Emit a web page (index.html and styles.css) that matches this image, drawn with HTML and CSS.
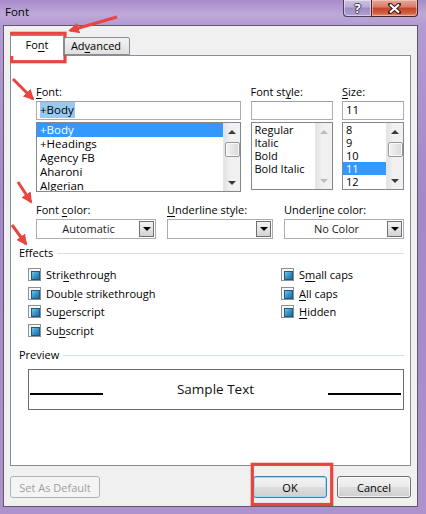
FILE: index.html
```html
<!DOCTYPE html>
<html lang="en">
<head>
    <meta charset="UTF-8">
    <title>Font</title>
    <link rel="stylesheet" href="styles.css">
</head>
<body>
    <div class="window">
        <div class="titlebar">
            <span class="title">Font</span>
            <div class="caption">
                <span class="cap-help">?</span>
                <span class="cap-close">
                    <svg width="13" height="11" viewBox="0 0 13 11">
                        <path d="M2 1.5 L11 9.5 M11 1.5 L2 9.5" stroke="#3b2226" stroke-width="4" stroke-linecap="square"/>
                        <path d="M2 1.5 L11 9.5 M11 1.5 L2 9.5" stroke="#fff" stroke-width="2"/>
                    </svg>
                </span>
            </div>
        </div>

        <div class="client">
            <div class="tabs">
                <div class="tab active">Fo<u>n</u>t</div>
                <div class="tab">Ad<u>v</u>anced</div>
            </div>

            <div class="panel">
                <div class="font-sec">
                    <div class="fcol">
                        <label><u>F</u>ont:</label>
                        <div class="input"><span class="sel-text">+Body</span></div>
                        <div class="list tall">
                            <div class="items big">
                                <div class="item selected">+Body</div>
                                <div class="item">+Headings</div>
                                <div class="item">Agency FB</div>
                                <div class="item">Aharoni</div>
                                <div class="item">Algerian</div>
                            </div>
                            <div class="scroll">
                                <span class="arr up"></span>
                                <span class="thumb"></span>
                                <span class="arr down"></span>
                            </div>
                        </div>
                    </div>
                    <div class="fcol">
                        <label>Font st<u>y</u>le:</label>
                        <div class="input"></div>
                        <div class="list">
                            <div class="items">
                                <div class="item">Regular</div>
                                <div class="item">Italic</div>
                                <div class="item">Bold</div>
                                <div class="item">Bold Italic</div>
                            </div>
                            <div class="scroll disabled">
                                <span class="arr up"></span>
                                <span class="arr down"></span>
                            </div>
                        </div>
                    </div>
                    <div class="fcol">
                        <label><u>S</u>ize:</label>
                        <div class="input">11</div>
                        <div class="list">
                            <div class="items">
                                <div class="item">8</div>
                                <div class="item">9</div>
                                <div class="item">10</div>
                                <div class="item selected">11</div>
                                <div class="item">12</div>
                            </div>
                            <div class="scroll">
                                <span class="arr up"></span>
                                <span class="thumb"></span>
                                <span class="arr down"></span>
                            </div>
                        </div>
                    </div>
                </div>

                <div class="color-row">
                    <div class="ccol w120">
                        <label>Font <u>c</u>olor:</label>
                        <div class="combo"><span class="combo-text">Automatic</span><span class="combo-btn"></span></div>
                    </div>
                    <div class="ccol w106">
                        <label><u>U</u>nderline style:</label>
                        <div class="combo"><span class="combo-text"></span><span class="combo-btn"></span></div>
                    </div>
                    <div class="ccol w120">
                        <label>Underl<u>i</u>ne color:</label>
                        <div class="combo"><span class="combo-text">No Color</span><span class="combo-btn"></span></div>
                    </div>
                </div>

                <div class="group-head effects-head">Effects</div>
                <div class="effects">
                    <div class="ecol">
                        <div class="check"><span class="cb"></span><span>Stri<u>k</u>ethrough</span></div>
                        <div class="check"><span class="cb"></span><span>Doub<u>l</u>e strikethrough</span></div>
                        <div class="check"><span class="cb"></span><span>Su<u>p</u>erscript</span></div>
                        <div class="check"><span class="cb"></span><span>Su<u>b</u>script</span></div>
                    </div>
                    <div class="ecol">
                        <div class="check"><span class="cb"></span><span>S<u>m</u>all caps</span></div>
                        <div class="check"><span class="cb"></span><span><u>A</u>ll caps</span></div>
                        <div class="check"><span class="cb"></span><span><u>H</u>idden</span></div>
                    </div>
                </div>

                <div class="group-head preview-head">Preview</div>
                <div class="preview">
                    <span class="pv-line"></span>
                    <span class="pv-text">Sample Text</span>
                    <span class="pv-line"></span>
                </div>
            </div>

            <div class="buttons">
                <button class="btn wide" disabled>Set As Default</button>
                <span class="spacer"></span>
                <button class="btn default">OK</button>
                <button class="btn">Cancel</button>
            </div>
        </div>

        <!-- red annotation marks drawn over the dialog -->
        <svg class="marks" width="426" height="514" viewBox="0 0 426 514">
            <defs>
                <marker id="head" markerWidth="3.6" markerHeight="3.6" refX="3" refY="1.8" orient="auto">
                    <path d="M0,0 L3.6,1.8 L0,3.6 z" fill="#e8453f"/>
                </marker>
            </defs>
            <rect x="11.7" y="33.3" width="53.3" height="28.4" fill="none" stroke="#e8453f" stroke-width="3.2"/>
            <rect x="252.3" y="464.3" width="79.4" height="40.2" fill="none" stroke="#e8453f" stroke-width="3.2"/>
            <g stroke="#e8453f" stroke-width="3" marker-end="url(#head)">
                <line x1="117" y1="17" x2="70" y2="30.5"/>
                <line x1="13" y1="79" x2="33" y2="99"/>
                <line x1="18" y1="182" x2="31" y2="202"/>
                <line x1="12" y1="225" x2="26" y2="244"/>
            </g>
        </svg>
    </div>
</body>
</html>
```

FILE: styles.css
```css
* {
    box-sizing: border-box;
    margin: 0;
    padding: 0;
}

body {
    width: 426px;
    height: 514px;
    overflow: hidden;
    font-family: 'Open Sans', 'Noto Sans', sans-serif;
    font-size: 11px;
    color: #000;
}

u {
    text-decoration-thickness: 1px;
    text-underline-offset: 2px;
}

.window {
    position: relative;
    width: 426px;
    height: 514px;
    padding: 0 8px 7px 3px;
    display: flex;
    flex-direction: column;
    background: linear-gradient(180deg, #a88bc9 0, #bda9d8 14px, #b39bd2 25px, #a487c7 200px, #ad92cd 514px);
}

.titlebar {
    height: 25px;
    display: flex;
    justify-content: space-between;
}

.title {
    padding: 4px 0 0 2px;
    font-size: 11.5px;
    line-height: 16px;
}

.caption {
    display: flex;
    height: 17px;
}

.cap-help, .cap-close {
    display: flex;
    align-items: center;
    justify-content: center;
    border: 1px solid #4a3f5e;
    border-top: none;
}

.cap-help {
    width: 28px;
    border-radius: 0 0 0 4px;
    border-right: none;
    background: linear-gradient(180deg, #cfc3e2 0, #b8a8d4 45%, #9f8cc1 50%, #b2a2d0 100%);
    box-shadow: inset 0 0 0 1px rgba(255, 255, 255, 0.45);
    color: #fff;
    font-weight: bold;
    font-size: 13px;
    line-height: 13px;
    text-shadow: 1px 0 0 #403850, -1px 0 0 #403850, 0 1px 0 #403850, 0 -1px 0 #403850;
}

.cap-close {
    width: 47px;
    border-radius: 0 0 4px 0;
    border-color: #4b2628;
    background: linear-gradient(180deg, #e7a89b 0, #d77a66 45%, #c2432c 50%, #cf5c3e 80%, #e39069 100%);
    box-shadow: inset 0 0 0 1px rgba(255, 220, 210, 0.5);
}

.client {
    flex: 1;
    border: 1px solid #5e586c;
    background: #f0f0f0;
    padding: 9px 6px 0 6px;
}

/* tabs */
.tabs {
    display: flex;
    align-items: flex-end;
    height: 20px;
    position: relative;
    z-index: 1;
}

.tab {
    height: 18px;
    width: 66px;
    border: 1px solid #898c95;
    border-radius: 2px 2px 0 0;
    background: linear-gradient(180deg, #f2f2f2, #e0e0e0);
    text-align: center;
    line-height: 16px;
    padding-right: 2px;
}

.tab.active {
    width: 54px;
    height: 21px;
    margin-bottom: -1px;
    border-bottom: none;
    background: #fff;
    line-height: 17px;
    padding-right: 0;
}

.panel {
    height: 411px;
    border: 1px solid #898c95;
    background: #fff;
    padding: 29px 6px 0 8px;
}

label {
    display: block;
    height: 14px;
    line-height: 14px;
}

/* font / style / size */
.font-sec {
    margin-left: 17px;
    display: grid;
    grid-template-columns: 205px 82px 62px;
    justify-content: space-between;
}

.input {
    margin-top: 2px;
    height: 19px;
    border: 1px solid #abadb3;
    border-top-color: #9ea1a8;
    padding-left: 3px;
    line-height: 16px;
    font-size: 11.5px;
}

.sel-text {
    background: #99c9ef;
    padding: 0 1px 1px 0;
}

.list {
    margin-top: 2px;
    height: 68px;
    border: 1px solid #828790;
    display: flex;
    overflow: hidden;
}

.list.tall {
    height: 70px;
}

.items {
    flex: 1;
    line-height: 13px;
}

.items.big {
    line-height: 14px;
    font-size: 11.5px;
}

.item {
    padding-left: 3px;
    white-space: nowrap;
}

.item.selected {
    background: #3399ff;
    color: #fff;
}

.scroll {
    width: 17px;
    display: flex;
    flex-direction: column;
    align-items: center;
    background: linear-gradient(90deg, #e3e3e3, #f1f1f1 40%, #f1f1f1);
    border-left: 1px solid #e6e6e6;
}

.arr {
    width: 0;
    height: 0;
    border-left: 4px solid transparent;
    border-right: 4px solid transparent;
}

.arr.up {
    margin-top: 7px;
    border-bottom: 4px solid #3a3a3a;
}

.arr.down {
    margin-top: auto;
    margin-bottom: 6px;
    border-top: 4px solid #3a3a3a;
}

.scroll.disabled .arr.up {
    border-bottom-color: #bdbdbd;
}

.scroll.disabled .arr.down {
    border-top-color: #bdbdbd;
}

.thumb {
    margin-top: 8px;
    width: 15px;
    height: 15px;
    border: 1px solid #979797;
    border-radius: 2px;
    background: linear-gradient(90deg, #f3f3f3, #e6e6e6 50%, #d8d8d8);
    box-shadow: inset 0 0 0 1px rgba(255, 255, 255, 0.8);
}

/* colour / underline combos */
.color-row {
    margin-top: 11px;
    margin-left: 17px;
    display: flex;
    justify-content: space-between;
}

.w120 {
    width: 120px;
}

.w106 {
    width: 106px;
}

.combo {
    margin-top: 2px;
    height: 20px;
    border: 1px solid #abadb3;
    background: #fff;
    display: flex;
    padding: 1px;
}

.combo-text {
    flex: 1;
    text-align: center;
    line-height: 16px;
    color: #1a1a1a;
}

.combo-btn {
    width: 15px;
    border: 1px solid #707070;
    background: linear-gradient(180deg, #f4f4f4, #e4e4e4 50%, #d3d3d3);
    display: flex;
    align-items: center;
    justify-content: center;
}

.combo-btn::after {
    content: "";
    border-left: 4px solid transparent;
    border-right: 4px solid transparent;
    border-top: 4px solid #000;
}

/* group headers */
.group-head {
    display: flex;
    align-items: center;
    height: 14px;
    line-height: 14px;
    gap: 4px;
}

.group-head::after {
    content: "";
    flex: 1;
    height: 1px;
    margin-top: 1px;
    background: #d5dfe5;
}

.effects-head {
    margin-top: 7px;
}

.preview-head {
    margin-top: 8px;
}

/* effects */
.effects {
    margin: 5px 0 0 9px;
    display: grid;
    grid-template-columns: 253px 1fr;
}

.check {
    height: 18.7px;
    display: flex;
    align-items: center;
    gap: 5px;
}

.cb {
    width: 13px;
    height: 13px;
    border: 1px solid #8e8f8f;
    background: linear-gradient(135deg, #f4f4f4, #ffffff);
    padding: 2px;
}

.cb::after {
    content: "";
    display: block;
    width: 100%;
    height: 100%;
    border: 1px solid #21587d;
    background: linear-gradient(135deg, #78c2e8 0, #3590c6 55%, #1f6ea3 100%);
}

/* preview */
.preview {
    margin: 7px 0 0 9px;
    height: 41px;
    border: 1px solid #6d6d6d;
    display: flex;
    align-items: flex-start;
    padding: 0 2px 0 1px;
}

.pv-line {
    width: 73px;
    height: 2px;
    background: #000;
    margin-top: 23px;
}

.pv-text {
    flex: 1;
    text-align: center;
    font-size: 13.5px;
    line-height: 16px;
    margin-top: 11px;
    color: #111;
}

/* bottom buttons */
.buttons {
    margin-top: 10px;
    display: flex;
    gap: 10px;
}

.spacer {
    flex: 1;
}

.btn {
    width: 74px;
    height: 22px;
    border: 1px solid #707070;
    border-radius: 3px;
    background: linear-gradient(180deg, #f2f2f2 0, #ebebeb 48%, #dddddd 52%, #cfcfcf 100%);
    box-shadow: inset 0 0 0 1px rgba(255, 255, 255, 0.7);
    font-family: inherit;
    font-size: 11px;
    color: #000;
}

.btn.wide {
    width: 90px;
}

.btn:disabled {
    border-color: #adb2b5;
    background: #f4f4f4;
    box-shadow: none;
    color: #a0a0a0;
}

.btn.default {
    border-color: #3c7fb1;
    box-shadow: inset 0 0 0 1px #9ddcf5;
}

.marks {
    position: absolute;
    top: 0;
    left: 0;
    pointer-events: none;
}
```
